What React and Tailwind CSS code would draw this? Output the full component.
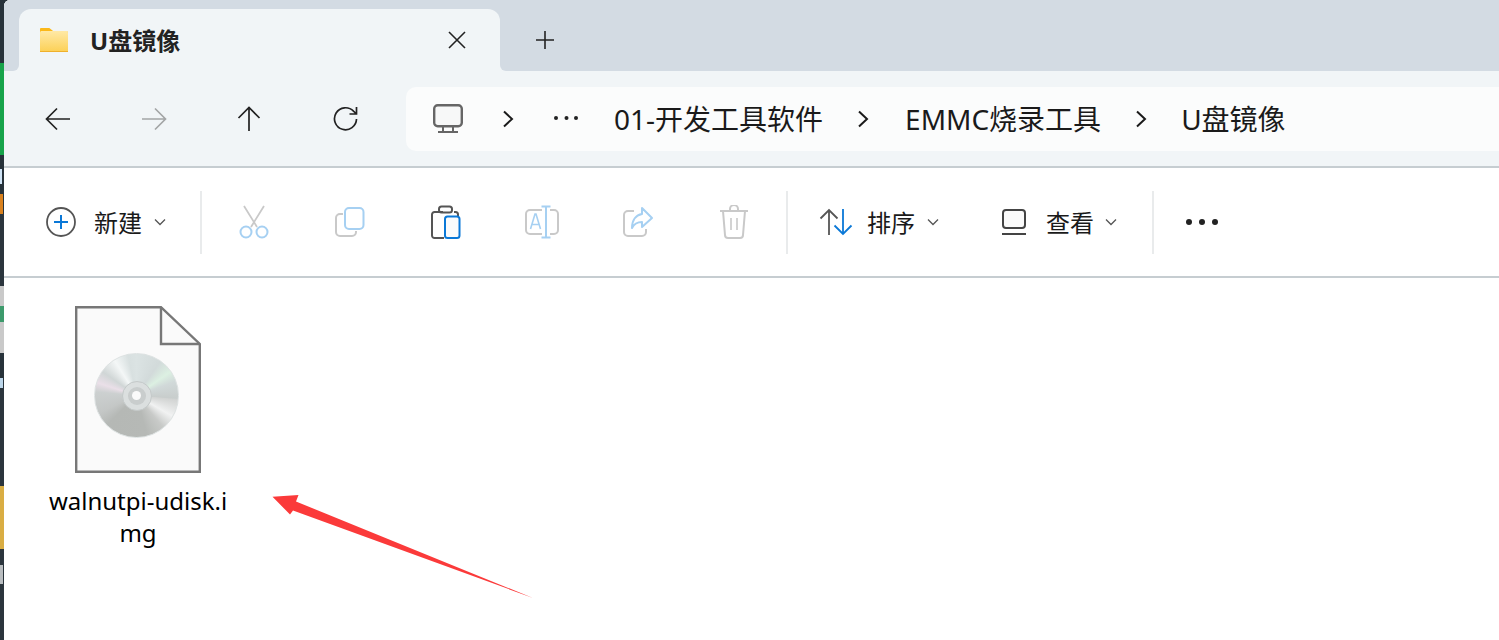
import React from 'react'

const font = "font-['Noto_Sans','Noto_Sans_CJK_SC',sans-serif]"

const Chevron = () => (
  <svg width="12" height="8" viewBox="0 0 12 8" fill="none" stroke="#555" strokeWidth="1.3"><path d="M1 1.5l5 5 5-5" /></svg>
)

const Crumb = () => (
  <svg width="12" height="18" viewBox="0 0 12 18" fill="none" stroke="#1a1a1a" strokeWidth="2"><path d="M2 1.5L10 9l-8 7.5" /></svg>
)

const Divider = () => <div className="w-[2px] h-[63px] bg-[#e9ebec]" />

const NavBtn = ({ w, children }) => (
  <div className="h-full flex items-center justify-center shrink-0" style={{ width: w }}>{children}</div>
)

const ToolBtn = ({ children }) => (
  <div className="w-[96px] h-full flex items-center justify-center shrink-0">{children}</div>
)

// left edge, the window behind this one
const strip = [
  ['h-[63px]', 'bg-[#27323a]'],
  ['h-[92px]', 'bg-[#17a34a]'],
  ['h-[14px]', 'bg-[#27323a]'],
  ['h-[15px] w-[2px]', 'bg-[#cfe3f5]'],
  ['h-[10px]', 'bg-[#27323a]'],
  ['h-[20px] w-[3px]', 'bg-[#d9811e]'],
  ['h-[72px]', 'bg-[#2b353d]'],
  ['h-[20px]', 'bg-[#c9c9c9]'],
  ['h-[16px]', 'bg-[#3d9a6c]'],
  ['h-[31px]', 'bg-[#c9c9c9]'],
  ['h-[25px]', 'bg-[#27323a]'],
  ['h-[10px] w-[3px]', 'bg-[#bcd6ea]'],
  ['h-[98px]', 'bg-[#2b353d]'],
  ['h-[63px]', 'bg-[#d9ad43]'],
  ['h-[16px]', 'bg-[#2b353d]'],
  ['h-[19px] w-[3px]', 'bg-[#b9bdc0]'],
  ['h-[56px]', 'bg-[#2b353d]'],
]

export default function App() {
  return (
    <div className={`relative w-[1499px] h-[640px] overflow-hidden flex bg-[#27323a] text-[#1a1a1a] ${font}`}>
      <div className="w-[4px] shrink-0 flex flex-col">
        {strip.map(([h, c], i) => <div key={i} className={`${h} ${c}`} />)}
      </div>

      <div className="flex-1 flex flex-col bg-white rounded-tl-[6px] overflow-hidden">
        {/* Tab strip */}
        <div className="h-[71px] flex bg-[#f1f5f7] shrink-0">
          <div className="w-[15px] bg-[#d3dbe3] rounded-br-[6px]" />
          <div className="w-[481px] flex flex-col">
            <div className="h-[9px] bg-[#d3dbe3]" />
            <div className="flex-1 bg-[#d3dbe3]">
              <div className="h-full bg-[#f1f5f7] rounded-t-[12px] flex items-center pl-[21px] pr-[33px]">
                <svg width="28" height="24" viewBox="0 0 30 24" preserveAspectRatio="none" className="shrink-0">
                  <defs>
                    <linearGradient id="fold" x1="0" y1="0" x2="0" y2="1">
                      <stop offset="0" stopColor="#ffe9a6" />
                      <stop offset="1" stopColor="#fcd055" />
                    </linearGradient>
                  </defs>
                  <path d="M1 0h9l4 3h14a2 2 0 0 1 2 2v4H0V1a1 1 0 0 1 1-1z" fill="#fbb81a" />
                  <rect x="0" y="3" width="30" height="21" rx="1.5" fill="url(#fold)" />
                  <rect x="0" y="23" width="30" height="1" fill="#efb02c" />
                </svg>
                <span className="ml-[22px] text-[24px] leading-none font-bold text-[#222] mb-[-1px] whitespace-nowrap">U盘镜像</span>
                <svg width="20" height="20" viewBox="0 0 20 20" fill="none" stroke="#222" strokeWidth="1.6" className="ml-auto"><path d="M2 2l16 16M18 2L2 18" /></svg>
              </div>
            </div>
          </div>
          <div className="flex-1 bg-[#d3dbe3] rounded-bl-[6px] flex items-center pl-[35px] pt-[9px]">
            <svg width="20" height="20" viewBox="0 0 20 20" fill="none" stroke="#222" strokeWidth="1.6"><path d="M10 1v18M1 10h18" /></svg>
          </div>
        </div>

        {/* Navigation row */}
        <div className="h-[95px] bg-[#f1f5f7] flex items-center border-b-0 shrink-0">
          <div className="h-full flex items-center pl-[6px]">
            <NavBtn w={96}>
              <svg width="26" height="24" viewBox="0 0 26 24" fill="none" stroke="#222" strokeWidth="1.7"><path d="M25 12H2M12 1.5L1.5 12 12 22.5" /></svg>
            </NavBtn>
            <NavBtn w={95}>
              <svg width="26" height="24" viewBox="0 0 26 24" fill="none" stroke="#a3a5a6" strokeWidth="1.7"><path d="M1 12h23M14 1.5L24.5 12 14 22.5" /></svg>
            </NavBtn>
            <NavBtn w={96}>
              <svg width="24" height="26" viewBox="0 0 24 26" fill="none" stroke="#222" strokeWidth="1.7"><path d="M12 25V2M1.5 12L12 1.5 22.5 12" /></svg>
            </NavBtn>
            <NavBtn w={98}>
              <svg width="26" height="26" viewBox="0 0 26 26" fill="none" stroke="#222" strokeWidth="1.7"><path d="M23.5 13A11 11 0 1 1 20.5 5.2L23.5 8M23.5 1v7h-7" /></svg>
            </NavBtn>
          </div>
          <div className="ml-[11px] flex-1 h-[64px] mb-[-1px] bg-[#fbfcfc] rounded-l-[10px] flex items-center pl-[27px] text-[28px] leading-none whitespace-nowrap">
            <svg width="30" height="30" viewBox="0 0 30 30" fill="none" stroke="#666" strokeWidth="2.4" className="shrink-0">
              <rect x="1.2" y="1.2" width="27.6" height="21" rx="3.5" fill="#f7f8f8" />
              <path d="M10 22.5v5M20 22.5v5M5 28h20" strokeWidth="2" />
            </svg>
            <div className="ml-[39px] shrink-0"><Crumb /></div>
            <svg width="24" height="4" viewBox="0 0 24 4" fill="#222" className="ml-[40px] shrink-0 mb-[2px]"><circle cx="2" cy="2" r="2" /><circle cx="12.5" cy="2" r="2" /><circle cx="22" cy="2" r="2" /></svg>
            <span className="ml-[36px]">01-开发工具软件</span>
            <div className="ml-[34px] shrink-0"><Crumb /></div>
            <span className="ml-[36px]">EMMC烧录工具</span>
            <div className="ml-[34px] shrink-0"><Crumb /></div>
            <span className="ml-[34px]">U盘镜像</span>
          </div>
        </div>
        <div className="h-[2px] bg-[#c6cdd1] shrink-0" />

        {/* Command bar */}
        <div className="h-[108px] flex items-center shrink-0 text-[24px] leading-none">
          <svg width="30" height="30" viewBox="0 0 30 30" fill="none" className="ml-[42px] shrink-0">
            <circle cx="15" cy="15" r="14" stroke="#555" strokeWidth="1.8" />
            <path d="M15 8v14M8 15h14" stroke="#0a78d7" strokeWidth="2" />
          </svg>
          <span className="ml-[18px] mt-[2px] whitespace-nowrap">新建</span>
          <div className="ml-[12px] shrink-0"><Chevron /></div>
          <div className="ml-[34px] shrink-0"><Divider /></div>

          <div className="ml-[4px] h-full flex items-center">
            <ToolBtn>
              <svg width="30" height="34" viewBox="0 0 30 34" fill="none">
                <path d="M5 1l13 21M25 1L12 22" stroke="#c9c9c9" strokeWidth="1.8" />
                <circle cx="7" cy="27" r="5.5" stroke="#a6d0f2" strokeWidth="2" />
                <circle cx="23" cy="27" r="5.5" stroke="#a6d0f2" strokeWidth="2" />
              </svg>
            </ToolBtn>
            <ToolBtn>
              <svg width="30" height="30" viewBox="0 0 30 30" fill="none">
                <path d="M8 7H5a4 4 0 0 0-4 4v14a4 4 0 0 0 4 4h12a4 4 0 0 0 4-4v-1" stroke="#c9c9c9" strokeWidth="2" />
                <rect x="10" y="1" width="18.5" height="21" rx="4" stroke="#a6d0f2" strokeWidth="2" />
              </svg>
            </ToolBtn>
            <ToolBtn>
              <svg width="30" height="34" viewBox="0 0 30 34" fill="none">
                <path d="M12 7H3.5A2.5 2.5 0 0 0 1 9.5v21A2.5 2.5 0 0 0 3.5 33H13M23 7h1.5A2.5 2.5 0 0 1 27 9.5V11" stroke="#555" strokeWidth="2" />
                <rect x="8" y="1.5" width="13" height="6" rx="2.5" stroke="#555" strokeWidth="2" />
                <rect x="14" y="11.5" width="14.5" height="21.5" rx="2.5" fill="#fafbfc" stroke="#0a78d7" strokeWidth="2" />
              </svg>
            </ToolBtn>
            <ToolBtn>
              <svg width="34" height="34" viewBox="0 0 34 34" fill="none">
                <path d="M17 5H5a4 4 0 0 0-4 4v16a4 4 0 0 0 4 4h12M25 5h4a4 4 0 0 1 4 4v16a4 4 0 0 1-4 4h-4" stroke="#c9c9c9" strokeWidth="2" />
                <path d="M21 2v30M16.5 1.5h9M16.5 32.5h9" stroke="#a6d0f2" strokeWidth="2" />
                <path d="M5.5 24l4.5-15h1l4.5 15M7 19.5h7" stroke="#a6d0f2" strokeWidth="1.6" />
              </svg>
            </ToolBtn>
            <ToolBtn>
              <svg width="32" height="32" viewBox="0 0 32 32" fill="none">
                <path d="M12 5H6a4 4 0 0 0-4 4v17a4 4 0 0 0 4 4h14a4 4 0 0 0 4-4v-3" stroke="#c9c9c9" strokeWidth="2" />
                <path d="M20 2l10 10-10 9v-5c-5 0-8 2-10 6 0-8 4-13 10-14z" stroke="#a6d0f2" strokeWidth="2" strokeLinejoin="round" />
              </svg>
            </ToolBtn>
            <ToolBtn>
              <svg width="30" height="34" viewBox="0 0 30 34" fill="none" stroke="#c9c9c9" strokeWidth="2">
                <path d="M1 6h28M11 6V4a3 3 0 0 1 8 0v2M4 6l2 24a3 3 0 0 0 3 3h12a3 3 0 0 0 3-3l2-24" />
                <path d="M12 13v12M18 13v12" strokeWidth="1.6" />
              </svg>
            </ToolBtn>
          </div>

          <div className="ml-[4px] shrink-0"><Divider /></div>
          <svg width="34" height="28" viewBox="0 0 34 28" fill="none" strokeWidth="1.8" className="ml-[31px] shrink-0">
            <path d="M10 27V2M1.5 10.5L10 2l8.5 8.5" stroke="#555" />
            <path d="M24 1v25M15.5 17.5L24 26l8.5-8.5" stroke="#0a78d7" />
          </svg>
          <span className="ml-[14px] mt-[2px] whitespace-nowrap">排序</span>
          <div className="ml-[12px] shrink-0"><Chevron /></div>
          <svg width="26" height="26" viewBox="0 0 26 26" fill="none" stroke="#444" strokeWidth="2" className="ml-[62px] shrink-0">
            <rect x="2" y="1" width="22" height="18" rx="3" fill="#fafafa" />
            <path d="M1 25h24" />
          </svg>
          <span className="ml-[19px] mt-[2px] whitespace-nowrap">查看</span>
          <div className="ml-[11px] shrink-0"><Chevron /></div>
          <div className="ml-[35px] shrink-0"><Divider /></div>
          <svg width="34" height="8" viewBox="0 0 34 8" fill="#222" className="ml-[31px] shrink-0"><circle cx="4" cy="4" r="3" /><circle cx="17" cy="4" r="3" /><circle cx="30" cy="4" r="3" /></svg>
        </div>
        <div className="h-[2px] bg-[#c6cdd1] shrink-0" />

        {/* File area */}
        <div className="flex-1 bg-white pt-[28px] pl-[42px]">
          <div className="w-[184px] flex flex-col items-center">
            <div className="relative w-[126px] h-[167px]">
              <svg width="126" height="167" viewBox="0 0 126 167" fill="none" className="block">
                <path d="M1.2 1.2H86L124.8 38V165.8H1.2z" fill="#fafafa" stroke="#777" strokeWidth="2.4" />
                <path d="M86 1.2V38H124.8" stroke="#777" strokeWidth="2.4" />
              </svg>
              <div className="absolute left-[19px] top-[47px] w-[85px] h-[85px] rounded-full border border-[#dde2e2] bg-[conic-gradient(#dbe3e3_0deg,#d2dada_35deg,#dcf0e2_55deg,#d1d9d9_70deg,#c8cdcc_94deg,#d2d4d3_96deg,#f1f2f2_120deg,#c8cac8_140deg,#b6b9b6_165deg,#b5b8b5_225deg,#c4c7c6_245deg,#ccd0d0_275deg,#eadfe8_288deg,#d0d6d6_305deg,#f4f7f7_328deg,#d8e0e0_348deg,#dbe3e3_360deg)] flex items-center justify-center">
                <div className="w-[30px] h-[30px] rounded-full border border-[#c4c9c9] bg-[#dbdfdf] flex items-center justify-center">
                  <div className="w-[18px] h-[18px] rounded-full bg-[#c9cdcd] flex items-center justify-center">
                    <div className="w-[9px] h-[9px] rounded-full bg-[#fafafa]" />
                  </div>
                </div>
              </div>
            </div>
            <div className="mt-[12px] w-[184px] text-center text-[24px] leading-[32px] text-black break-all">walnutpi-udisk.img</div>
          </div>
        </div>
      </div>

      {/* Annotation arrow */}
      <svg width="1499" height="640" viewBox="0 0 1499 640" className="absolute inset-0 pointer-events-none">
        <path d="M272.5 496.7L298.5 495L296 501.5L533 598L293 510.5L290 514.5z" fill="#fb3a3a" />
      </svg>
    </div>
  )
}
